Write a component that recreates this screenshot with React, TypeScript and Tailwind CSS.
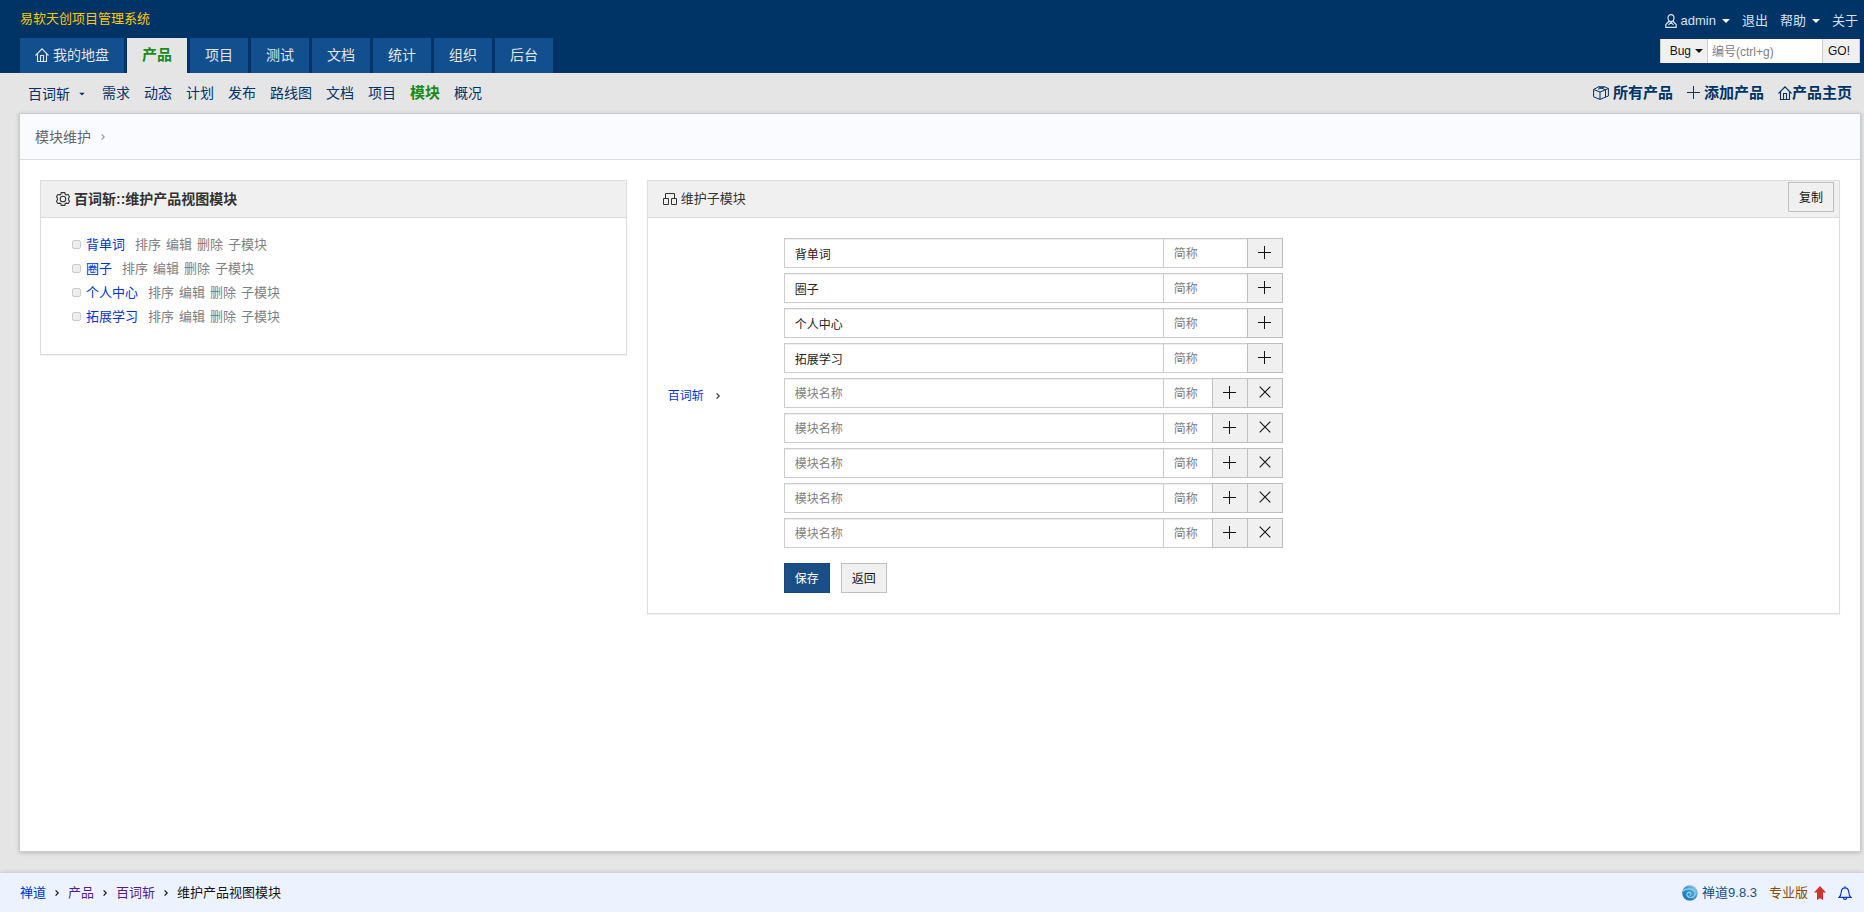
import React from "react"

const mainTabs = ["项目", "测试", "文档", "统计", "组织", "后台"]
const subTabs = ["需求", "动态", "计划", "发布", "路线图", "文档", "项目", "模块", "概况"]
const modules = ["背单词", "圈子", "个人中心", "拓展学习"]
const moduleActions = ["排序", "编辑", "删除", "子模块"]
const newRows = [1, 2, 3, 4, 5]

function HomeIcon() {
  return (
    <svg className="size-3.5 shrink-0" viewBox="0 0 14 14" fill="none" stroke="currentColor" strokeWidth="1.1">
      <path d="M.5 7.500 7 .9l6.500 6.600M2.500 5.800v7.700h9V5.800M5.500 13.500v-6h3v6" />
    </svg>
  )
}

function UserIcon() {
  return (
    <svg className="h-3.5 w-3 shrink-0" viewBox="0 0 12 14" fill="none" stroke="currentColor" strokeWidth="1.2">
      <path d="M6 .7c2 0 3 1.400 3 3.300S7.800 7.600 6 7.600 3 6 3 4 4 .7 6 .7ZM4.200 7 .8 10.500v2.800h10.400v-2.800L7.800 7M3.500 10.800 6 8.300l2.500 2.500" />
    </svg>
  )
}

function CubeIcon() {
  return (
    <svg className="h-3.5 w-4 shrink-0" viewBox="0 0 16 14" fill="none" stroke="currentColor" strokeWidth="1">
      <path d="M.6 3.500 5.500.8h6l3.900 1.700v7.500l-3 1.200L7 13.400.6 10.800zM.6 3.500 7 6l5.500-2.200L15.400 2.500M7 6v7.400M12.500 3.800v7.400M5.500.8l7 3M11.500.8 5.200 3.200" />
    </svg>
  )
}

function PlusIcon() {
  return (
    <svg className="size-[13px] shrink-0" viewBox="0 0 13 13" stroke="currentColor" strokeWidth="1">
      <path d="M0 6.500h13M6.500 0v13" />
    </svg>
  )
}

function CloseIcon() {
  return (
    <svg className="size-3 shrink-0" viewBox="0 0 12 12" stroke="currentColor" strokeWidth="1.1">
      <path d="m.7.7 10.600 10.600M11.300.7.7 11.300" />
    </svg>
  )
}

function GearIcon() {
  return (
    <svg className="size-3.5 shrink-0" viewBox="0 0 14 14" fill="none" stroke="currentColor" strokeWidth="1.1">
      <path d="M5.200.6h3.600l.4 1.700 1 .6 2-.4 1.300 2.200-.9 1.500v1.600l.9 1.500-1.300 2.200-2-.4-1 .6-.4 1.700H5.200l-.4-1.700-1-.6-2 .4L.5 9.300l.9-1.500V6.200L.5 4.700l1.300-2.200 2 .4 1-.6z" />
      <circle cx="7" cy="7" r="2.800" />
    </svg>
  )
}

function SitemapIcon() {
  return (
    <svg className="h-3 w-3.5 shrink-0" viewBox="0 0 14 12" fill="none" stroke="currentColor" strokeWidth="1">
      <path d="M.5 5.500h5v6h-5zM8.500 5.500h5v6h-5zM2.500 5.500v-5h9v5" />
    </svg>
  )
}

function Caret() {
  return (
    <svg className="h-1 w-2 shrink-0" viewBox="0 0 8 4" fill="currentColor">
      <path d="M0 0h8L4 4z" />
    </svg>
  )
}

function Chevron() {
  return (
    <svg className="h-1.5 w-1 shrink-0" viewBox="0 0 4 6" fill="none" stroke="currentColor" strokeWidth="1.2">
      <path d="m.6.4 2.600 2.600L.6 5.600" />
    </svg>
  )
}

function ZentaoLogo() {
  return (
    <svg className="size-4 shrink-0" viewBox="0 0 16 16">
      <defs>
        <linearGradient id="orb" x1="1" y1="0" x2="0" y2="1">
          <stop offset="0" stopColor="#c3dbe8" />
          <stop offset=".45" stopColor="#3f97cc" />
          <stop offset="1" stopColor="#1667a8" />
        </linearGradient>
      </defs>
      <circle cx="8" cy="8" r="7.800" fill="url(#orb)" />
      <path d="M.8 6C4 3.200 10.500 3 12.800 6.500c1.500 2.800-.8 6-4.300 6-2.800 0-4.300-2.200-3.300-4 .9-1.500 3.600-1.400 3.800.4.1.9-.8 1.400-1.500 1" fill="none" stroke="#8fd6f2" strokeWidth="1.200" />
    </svg>
  )
}

function AddonButton({ label, children }: { label: string; children: React.ReactNode }) {
  return (
    <button
      type="button"
      aria-label={label}
      className="-ml-px flex w-9 shrink-0 items-center justify-center border border-[#bfbfbf] bg-[#f0f0f0] pb-0.5 text-[#141414]"
    >
      {children}
    </button>
  )
}

function ModuleRow({ name, removable }: { name?: string; removable?: boolean }) {
  const field = "h-[30px] min-w-0 border border-[#ccc] bg-white px-2.5 pt-px text-xs leading-7 text-[#222] shadow-[inset_0_1px_1px_rgba(0,0,0,0.075)] outline-none placeholder:text-[#808080]"
  return (
    <div className="flex w-full">
      <input type="text" aria-label="模块名称" placeholder="模块名称" defaultValue={name} className={`${field} w-[380px]`} />
      <input type="text" aria-label="简称" placeholder="简称" className={`${field} -ml-px flex-1`} />
      <AddonButton label="添加"><PlusIcon /></AddonButton>
      {removable && <AddonButton label="删除"><CloseIcon /></AddonButton>}
    </div>
  )
}

function Header() {
  return (
    <header className="flex justify-between bg-[#036] pl-5 pr-1">
      <div>
        <h1 className="flex h-[38px] items-center text-[13px] text-[#fc0]">易软天创项目管理系统</h1>
        <nav className="flex h-[35px] gap-[3px] text-sm">
          <a href="#" className="flex items-center gap-1 bg-[#114f8e] px-[15px] pb-0.5 text-[#e5e5e5]">
            <HomeIcon />
            我的地盘
          </a>
          <a href="#" className="flex items-center bg-[#e5e5e5] px-[15px] pb-0.5 text-[15px] font-bold text-[#1a8a1a]">产品</a>
          {mainTabs.map((tab) => (
            <a key={tab} href="#" className="flex items-center bg-[#114f8e] px-[15px] pb-0.5 text-[#e5e5e5]">{tab}</a>
          ))}
        </nav>
      </div>
      <div className="pt-1">
        <div className="flex h-[35px] items-center justify-end gap-3 pb-0.5 pr-0.5 text-[13px] text-[#d5e3f0]">
          <a href="#" className="flex items-center gap-1">
            <UserIcon />
            admin
            <span className="ml-0.5 text-white"><Caret /></span>
          </a>
          <a href="#">退出</a>
          <a href="#" className="flex items-center gap-1.5">
            帮助
            <span className="text-white"><Caret /></span>
          </a>
          <a href="#">关于</a>
        </div>
        <form className="ml-auto flex h-6 w-[200px] text-xs text-[#141414]">
          <button type="button" className="flex w-12 items-center justify-end gap-1 border border-y-0 border-[#ccc] bg-[#f0f0f0] pr-1">
            Bug
            <Caret />
          </button>
          <input
            type="text"
            aria-label="编号"
            placeholder="编号(ctrl+g)"
            className="min-w-0 flex-1 bg-white px-1 pt-0.5 text-xs outline-none placeholder:text-[#808080]"
          />
          <button type="button" className="w-[38px] border border-y-0 border-[#ccc] bg-[#f0f0f0] pr-1">GO!</button>
        </form>
      </div>
    </header>
  )
}

function SubNav() {
  return (
    <nav className="flex h-10 items-center justify-between pl-7 pr-3 text-sm text-[#036]">
      <div className="flex items-center gap-3.5">
        <a href="#" className="mr-0.5 flex items-center gap-2 pt-0.5">
          百词斩
          <span className="scale-75"><Caret /></span>
        </a>
        {subTabs.map((tab) =>
          tab === "模块" ? (
            <a key={tab} href="#" className="text-[15px] font-bold text-[#1a8a1a]">{tab}</a>
          ) : (
            <a key={tab} href="#">{tab}</a>
          )
        )}
      </div>
      <div className="flex items-center gap-3.5 text-[15px] font-bold">
        <a href="#" className="flex items-center gap-1"><CubeIcon />所有产品</a>
        <a href="#" className="flex items-center gap-1"><PlusIcon />添加产品</a>
        <a href="#" className="flex items-center"><HomeIcon />产品主页</a>
      </div>
    </nav>
  )
}

function ModuleTree() {
  return (
    <section className="self-start border border-[#ddd] shadow-[0_1px_1px_rgba(0,0,0,0.05)]">
      <h2 className="flex h-[37px] items-center gap-1 border-b border-[#ddd] bg-[#f0f0f0] px-[15px] text-sm font-bold text-[#333]">
        <GearIcon />
        百词斩::维护产品视图模块
      </h2>
      <ul className="px-[31px] pb-[25px] pt-[15px] text-[13px]">
        {modules.map((name) => (
          <li key={name} className="flex h-6 items-center">
            <span className="mb-0.5 mr-[5px] size-[9px] rounded-xs border border-[#ccc] bg-[#eee]" />
            <a href="#" className="mr-2.5 text-[#03c]">{name}</a>
            <span className="flex gap-[5px] text-[#808080]">
              {moduleActions.map((action) => (
                <a key={action} href="#">{action}</a>
              ))}
            </span>
          </li>
        ))}
      </ul>
    </section>
  )
}

function ChildModules() {
  return (
    <section className="col-span-2 border border-[#ddd] shadow-[0_1px_1px_rgba(0,0,0,0.05)]">
      <div className="flex h-[37px] items-center justify-between border-b border-[#ddd] bg-[#f0f0f0] pl-[15px] pr-[5px] text-[13px] text-[#333]">
        <h2 className="flex items-center gap-1">
          <SitemapIcon />
          维护子模块
        </h2>
        <button type="button" className="mb-1 h-[30px] border border-[#bfbfbf] px-2.5 pt-0.5 text-xs text-[#141414]">复制</button>
      </div>
      <form className="flex px-5 py-5">
        <div className="flex w-[116px] shrink-0 items-center gap-3 pb-10 text-xs text-[#333]">
          <a href="#" className="text-[#03c]">百词斩</a>
          <Chevron />
        </div>
        <div className="flex w-[499px] flex-col gap-[5px]">
          {modules.map((name) => (
            <ModuleRow key={name} name={name} />
          ))}
          {newRows.map((row) => (
            <ModuleRow key={row} removable />
          ))}
          <div className="mt-2.5 flex gap-[11px] text-xs">
            <button type="button" className="h-[30px] border border-[#16467a] bg-[#1a4f85] px-2.5 pt-0.5 text-white">保存</button>
            <button type="button" className="h-[30px] border border-[#bfbfbf] bg-[#f0f0f0] px-2.5 pt-0.5 text-[#141414]">返回</button>
          </div>
        </div>
      </form>
    </section>
  )
}

function Footer() {
  return (
    <footer className="flex h-[39px] items-center justify-between bg-[#edf3fe] px-5 text-[13px] text-[#141414] shadow-[0_-1px_4px_rgba(0,0,0,0.12)]">
      <div className="flex items-center gap-[9px]">
        <a href="#" className="text-[#03c]">禅道</a>
        <Chevron />
        <a href="#" className="text-[#551a8b]">产品</a>
        <Chevron />
        <a href="#" className="text-[#551a8b]">百词斩</a>
        <Chevron />
        <span>维护产品视图模块</span>
      </div>
      <div className="-mr-2 flex items-center">
        <a href="#" className="mr-3 flex items-center gap-1 text-[#1a4f85]"><ZentaoLogo />禅道9.8.3</a>
        <a href="#" className="mr-3 flex items-center gap-1.5 text-[#8a4b08]">
          专业版
          <svg className="h-3.5 w-3" viewBox="0 0 12 14" fill="#d2322d">
            <path d="M6 0l6 6.500H9V14L6 12.300 3 14V6.500H0z" />
          </svg>
        </a>
        <a href="#" aria-label="消息" className="text-[#03c]">
          <svg className="size-3.5" viewBox="0 0 14 14" fill="none" stroke="currentColor" strokeWidth="1.1">
            <path d="M7 .3v1.500M1 11.400c1.600-1.200 2-2.500 2.200-5C3.400 3.500 4.800 1.900 7 1.900s3.600 1.600 3.800 4.500c.2 2.500.6 3.800 2.200 5zM5.300 11.400c0 2.600 3.400 2.600 3.400 0" />
          </svg>
        </a>
      </div>
    </footer>
  )
}

export default function App() {
  return (
    <div className="flex min-h-screen flex-col bg-[#e5e5e5] font-['Liberation_Sans','Noto_Sans_CJK_SC',sans-serif] leading-5">
      <Header />
      <SubNav />
      <main className="mb-[21px] ml-[19px] mr-[3px] flex-1 border border-[#ccc] bg-white shadow-[0_1px_4px_rgba(0,0,0,0.2)]">
        <div className="flex h-[46px] items-center gap-2.5 border-b border-[#ddd] bg-[#f9fbff] px-[15px] text-sm text-[#666]">
          模块维护
          <span className="text-[#999]"><Chevron /></span>
        </div>
        <div className="grid grid-cols-3 gap-5 p-5">
          <ModuleTree />
          <ChildModules />
        </div>
      </main>
      <Footer />
    </div>
  )
}
